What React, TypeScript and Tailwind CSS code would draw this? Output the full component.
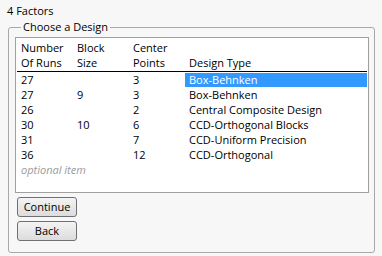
const rows = [
  { runs: '27', block: '', center: '3', type: 'Box-Behnken', selected: true },
  { runs: '27', block: '9', center: '3', type: 'Box-Behnken', selected: false },
  { runs: '26', block: '', center: '2', type: 'Central Composite Design', selected: false },
  { runs: '30', block: '10', center: '6', type: 'CCD-Orthogonal Blocks', selected: false },
  { runs: '31', block: '', center: '7', type: 'CCD-Uniform Precision', selected: false },
  { runs: '36', block: '', center: '12', type: 'CCD-Orthogonal', selected: false },
];

export default function App() {
  return (
    <div
      className="w-[382px] h-[256px] overflow-hidden bg-[#f7f7f7] text-[11px] text-black"
      style={{ fontFamily: '"Segoe UI", "Open Sans", "Noto Sans", sans-serif' }}
    >
      <div className="h-[20px] pl-[7px] pt-[4px] leading-[14px]">4 Factors</div>

      <fieldset className="ml-[8px] w-[367px] h-[233px] border border-[#a8a8a8] rounded-[3px] pl-[6px] pr-[5px]">
        <legend className="ml-[6px] px-[2px] leading-[14px]">Choose a Design</legend>

        {/* List box */}
        <div className="mt-[3px] h-[156px] border border-[#a0a0a0] bg-white px-[1px]">
          <div className="grid grid-cols-[56px_56px_56px_1fr] border-b border-black pt-[2px] pb-[1px] leading-[15px]">
            <div className="pl-[4px]">Number<br />Of Runs</div>
            <div className="pl-[4px]">Block<br />Size</div>
            <div className="pl-[4px]">Center<br />Points</div>
            <div className="pl-[4px] pt-[15px]">Design Type</div>
          </div>

          {rows.map((r, i) => (
            <div key={i} className="grid grid-cols-[56px_56px_56px_1fr] h-[15px] pt-[1px] leading-[14px]">
              <div className="pl-[4px]">{r.runs}</div>
              <div className="pl-[4px]">{r.block}</div>
              <div className="pl-[4px]">{r.center}</div>
              <div className={`pl-[4px] h-[14px] ${r.selected ? 'bg-[#3399ff] text-white' : ''}`}>{r.type}</div>
            </div>
          ))}
          <div className="h-[15px] pt-[1px] pl-[4px] leading-[14px] italic text-[#9a9a9a]">optional item</div>
        </div>

        {/* Buttons */}
        <div className="flex flex-col gap-[4px] mt-[4px] ml-[2px]">
          <button className="w-[60px] h-[20px] rounded-[3px] border border-[#707070] bg-gradient-to-b from-[#f4f4f4] to-[#dcdcdc] leading-[16px]">
            Continue
          </button>
          <button className="w-[60px] h-[20px] rounded-[3px] border border-[#707070] bg-gradient-to-b from-[#f4f4f4] to-[#dcdcdc] leading-[16px]">
            Back
          </button>
        </div>
      </fieldset>
    </div>
  );
}
